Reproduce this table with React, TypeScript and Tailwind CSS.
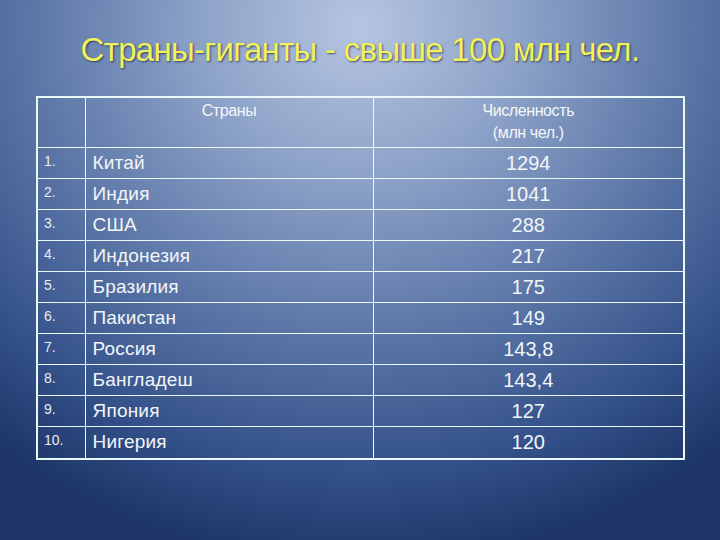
import React from "react"

type Row = { n: string; name: string; value: string }

const rows: Row[] = [
  { n: "1.", name: "Китай", value: "1294" },
  { n: "2.", name: "Индия", value: "1041" },
  { n: "3.", name: "США", value: "288" },
  { n: "4.", name: "Индонезия", value: "217" },
  { n: "5.", name: "Бразилия", value: "175" },
  { n: "6.", name: "Пакистан", value: "149" },
  { n: "7.", name: "Россия", value: "143,8" },
  { n: "8.", name: "Бангладеш", value: "143,4" },
  { n: "9.", name: "Япония", value: "127" },
  { n: "10.", name: "Нигерия", value: "120" },
]

export default function App() {
  return (
    <div
      className="w-[720px] h-[540px] overflow-hidden bg-[radial-gradient(ellipse_80%_100%_at_50%_5%,#b6c5e1_0%,#8da2c8_28%,#5f79a9_55%,#34518a_82%,#1d3568_100%)] text-[#f2f6f8]"
      style={{ fontFamily: '"Liberation Sans", Arial, sans-serif' }}
    >
      {/* title */}
      <h1 className="pt-[32px] h-[96px] text-center text-[33px] leading-[36px] tracking-[-0.7px] text-[#f2f25c] [text-shadow:1px_1px_2px_rgba(20,30,60,0.7)]">
        Страны-гиганты - свыше 100 млн чел.
      </h1>

      {/* table */}
      <table className="ml-[36px] w-[649px] border-collapse border-2 border-[#eaf8f6] table-fixed">
        <colgroup>
          <col className="w-[48px]" />
          <col className="w-[288px]" />
          <col />
        </colgroup>
        <thead>
          <tr className="h-[50px] text-[16px] leading-[22px]">
            <th className="border border-[#eaf8f6] p-0" />
            <th className="border border-[#eaf8f6] align-top pt-[2px] font-normal text-[#f4f7fa] tracking-[-0.4px]">Страны</th>
            <th className="border border-[#eaf8f6] align-top pt-[2px] font-normal text-[#f4f7fa] tracking-[-0.4px]">
              <div>Численность</div>
              <div>(млн чел.)</div>
            </th>
          </tr>
        </thead>
        <tbody>
          {rows.map((r, i) => (
            <tr key={r.n} className={i === rows.length - 1 ? "h-[33px]" : "h-[31px]"}>
              <td className="border border-[#eaf8f6] align-top pl-[6px] pt-[5px] text-[14px] leading-[16px] text-[#e8eef4]">{r.n}</td>
              <td className="border border-[#eaf8f6] pl-[7px] text-[19px] leading-[22px] tracking-[0.2px]">{r.name}</td>
              <td className="border border-[#eaf8f6] text-center text-[20px] leading-[22px]">{r.value}</td>
            </tr>
          ))}
        </tbody>
      </table>
    </div>
  )
}
